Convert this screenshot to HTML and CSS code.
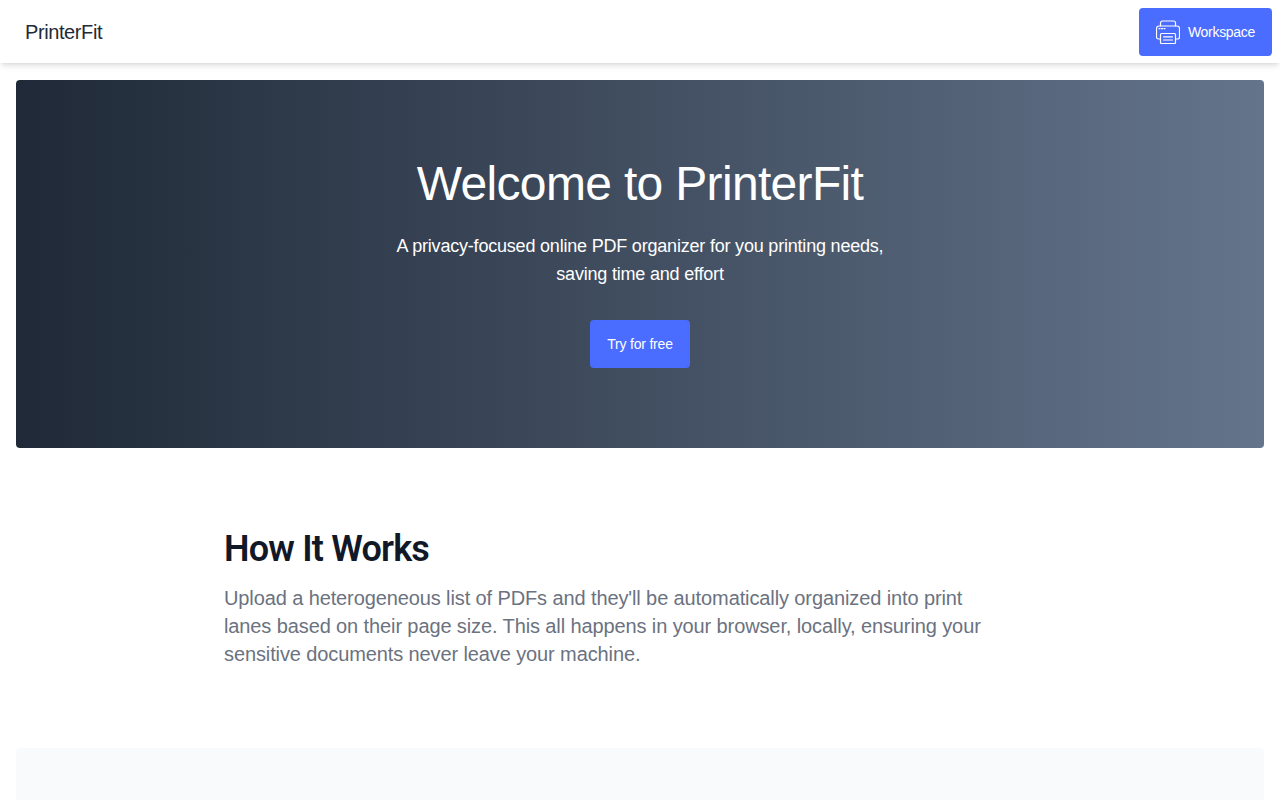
FILE: index.html
```html
<!DOCTYPE html>
<html lang="en">
<head>
    <meta charset="UTF-8">
    <meta name="viewport" content="width=device-width, initial-scale=1.0">
    <title>PrinterFit</title>
    <link rel="stylesheet" href="styles.css">
</head>
<body>
    <nav class="navbar">
        <a class="logo" href="#">PrinterFit</a>
        <a class="btn" href="#">
            <svg class="btn-icon" viewBox="0 0 24 24" fill="none" stroke="currentColor" stroke-width="1.2" stroke-linecap="round" stroke-linejoin="round">
                <path d="M4.500 6V3a2 2 0 0 1 2-2h11a2 2 0 0 1 2 2v3"/>
                <path d="M4.500 19H2.500a2 2 0 0 1-2-2V8.500A2.500 2.500 0 0 1 3 6h18a2.500 2.500 0 0 1 2.500 2.500V17a2 2 0 0 1-2 2h-2"/>
                <rect x="4.500" y="13.500" width="15" height="10" rx="1"/>
                <path d="M7.500 16.800h9M7.500 20h9"/>
                <path d="M3 8.700h1M5.500 8.700h1M8 8.700h1"/>
            </svg>
            Workspace
        </a>
    </nav>

    <main class="page">
        <section class="hero">
            <h1>Welcome to PrinterFit</h1>
            <p>A privacy-focused online PDF organizer for you printing needs,<br>saving time and effort</p>
            <a class="btn btn-hero" href="#">Try for free</a>
        </section>

        <section class="how">
            <h2>How It Works</h2>
            <p>Upload a heterogeneous list of PDFs and they'll be automatically organized into print lanes based on their page size. This all happens in your browser, locally, ensuring your sensitive documents never leave your machine.</p>
        </section>

        <section class="panel"></section>
    </main>
</body>
</html>
```

FILE: styles.css
```css
:root {
  --primary-color: #4a6cff;
  --heading-color: #111827;
  --muted-color: #6b7280;
  --panel-color: #f9fafb;
}

* {
  box-sizing: border-box;
}

html,
body {
  height: 800px;
  overflow: hidden;
}

body {
  font-family: 'Liberation Sans', Arial, sans-serif;
  background-color: white;
  color: #1f2937;
  line-height: 1.5;
  margin: 0;
  padding: 0;
}

a {
  text-decoration: none;
}

.navbar {
  position: relative;
  display: flex;
  align-items: center;
  justify-content: space-between;
  padding: 8px 8px 7px;
  background-color: white;
  box-shadow: 0 4px 6px -1px rgba(0, 0, 0, 0.1), 0 2px 4px -2px rgba(0, 0, 0, 0.1);
}

.logo {
  padding: 0 17px;
  font-size: 20px;
  line-height: 28px;
  letter-spacing: -0.4px;
  color: #1f2937;
}

.btn {
  display: inline-flex;
  align-items: center;
  justify-content: center;
  gap: 8px;
  height: 48px;
  padding: 0 17px;
  border-radius: 4px;
  background-color: var(--primary-color);
  color: white;
  font-size: 14px;
  letter-spacing: -0.3px;
}

.btn-hero {
  letter-spacing: -0.2px;
}

.btn-icon {
  width: 24px;
  height: 24px;
}

.page {
  padding: 17px 16px 16px;
}

.hero {
  display: flex;
  flex-direction: column;
  align-items: center;
  height: 368px;
  padding-top: 72px;
  border-radius: 4px;
  background-image: linear-gradient(to right, #1f2937, #64748b);
  color: white;
  text-align: center;
}

.hero h1 {
  margin: 0;
  font-size: 48px;
  font-weight: 400;
  line-height: 64px;
  letter-spacing: -0.67px;
}

.hero p {
  margin: 16px 0 32px;
  font-size: 18px;
  line-height: 28px;
  letter-spacing: -0.2px;
}

.how {
  height: 300px;
  padding: 81px 208px 0;
}

.how h2 {
  margin: 0;
  font-family: 'Roboto', sans-serif;
  font-size: 36px;
  font-weight: 600;
  line-height: 40px;
  letter-spacing: -0.8px;
  color: var(--heading-color);
}

.how p {
  max-width: 768px;
  margin: 15px 0 0;
  font-size: 20px;
  line-height: 28px;
  letter-spacing: -0.11px;
  color: var(--muted-color);
}

.panel {
  height: 300px;
  border-radius: 4px;
  background-color: var(--panel-color);
}
```
